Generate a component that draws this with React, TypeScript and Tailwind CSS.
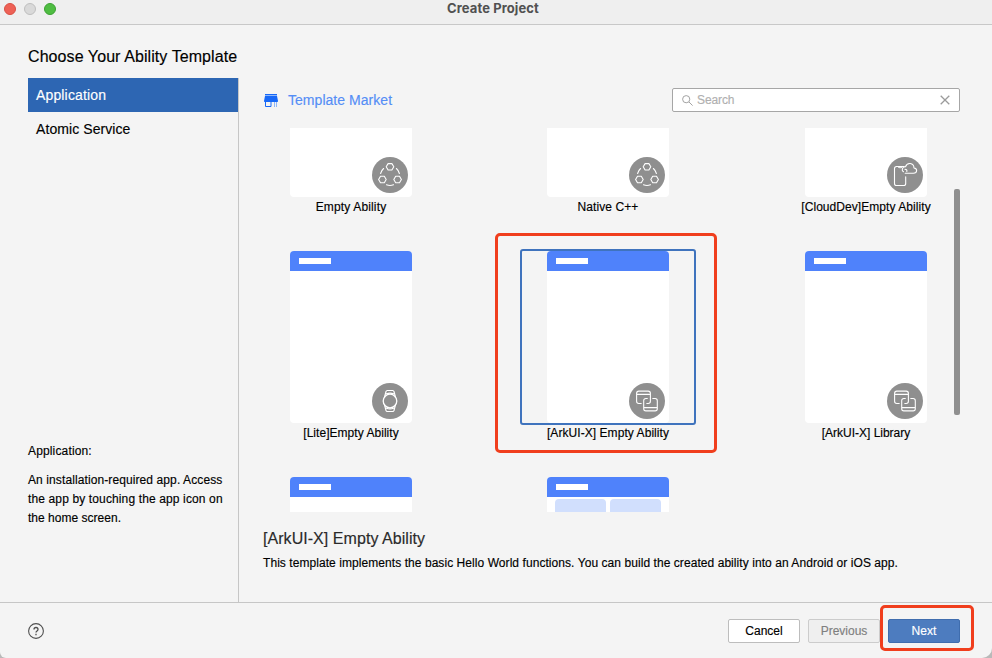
import React from "react";

type Badge = "nodes" | "cloud" | "watch" | "link" | "none";

interface Template {
  name: string;
  badge: Badge;
  selected?: boolean;
  tiles?: boolean;
  spacing: string;
}

const templates: Template[] = [
  { name: "Empty Ability", badge: "nodes", spacing: "tracking-[0.15px]" },
  { name: "Native C++", badge: "nodes", spacing: "tracking-[0.08px]" },
  { name: "[CloudDev]Empty Ability", badge: "cloud", spacing: "tracking-[0.06px]" },
  { name: "[Lite]Empty Ability", badge: "watch", spacing: "tracking-[0.04px]" },
  { name: "[ArkUI-X] Empty Ability", badge: "link", selected: true, spacing: "tracking-[0.06px]" },
  { name: "[ArkUI-X] Library", badge: "link", spacing: "tracking-[-0.01px]" },
  { name: "", badge: "none", spacing: "" },
  { name: "", badge: "none", tiles: true, spacing: "" },
];

function BadgeIcon({ kind }: { kind: Badge }) {
  return (
    <svg width="36" height="36" viewBox="0 0 36 36" fill="none" stroke="white" strokeWidth="1.1" strokeLinecap="round" strokeLinejoin="round">
      <circle cx="18" cy="18" r="18" fill="#8f8f8f" stroke="none" />
      {kind === "nodes" && (
        <>
          <path d="M16.1 6.6h3.8l1.9 3.2-1.9 3.2h-3.8l-1.9-3.2zM8.5 19.3h3.8l1.9 3.2-1.9 3.2H8.5l-1.9-3.2zM23.7 19.3h3.8l1.9 3.2-1.9 3.2h-3.8l-1.9-3.2z" />
          <path d="M8.6 16.5c.6-2 1.6-3.8 3-5M27.4 16.5c-.6-2-1.6-3.8-3-5M14.5 27.8c2.2.8 4.8.8 7 0" />
        </>
      )}
      {kind === "cloud" && (
        <>
          <path d="M17.2 9.5H9.6c-1.4 0-2.1.8-2.1 2.1v14.8c0 1.4.8 2.1 2.1 2.1h7c1.4 0 2.1-.8 2.1-2.1v-6.6M11.5 9.8c.2.8.6 1 1.6 1s1.4-.2 1.6-1" />
          <path d="M18.2 16.3h8.2c4.2 0 4.2-4.9.6-5.3-.2-5.4-6.9-6-8.5-1.2-3.9-.3-3.9 4.2-2 5M18 12.2c1.6 0 2.2 1 1.8 2.3" />
        </>
      )}
      {kind === "watch" && (
        <>
          <circle cx="18" cy="18" r="6.8" strokeWidth="1.3" />
          <path strokeWidth="1.2" d="M12.6 14l1.3-5.2c.3-.9.7-1.3 1.5-1.3h5.2c.8 0 1.2.4 1.5 1.3l1.3 5.2M12.6 22l1.3 5.2c.3.9.7 1.3 1.5 1.3h5.2c.8 0 1.2-.4 1.5-1.3l1.3-5.2M14.5 10.8c2-.7 5-.7 7 0M14.5 25.2c2 .7 5 .7 7 0" />
        </>
      )}
      {kind === "link" && (
        <>
          <path d="M12.2 20.5H9.8c-1.4 0-2.2-.8-2.2-2.2v-8c0-1.4.8-2.2 2.2-2.2h9.4c1.4 0 2.2.8 2.2 2.2v8c0 1.4-.8 2.2-2.2 2.2h-1.4M7.8 11.4h13.4" />
          <path d="M18.3 15.5h-1.4c-1.4 0-2.2.8-2.2 2.2v8c0 1.4.8 2.2 2.2 2.2h9.2c1.4 0 2.2-.8 2.2-2.2v-8c0-1.4-.8-2.2-2.2-2.2h-2.3M14.9 24.6h13.2" />
        </>
      )}
    </svg>
  );
}

function TemplateCard({ item }: { item: Template }) {
  return (
    <div className="flex h-[226px] w-[176px] flex-col items-center">
      <div className={`flex h-[176px] w-[176px] shrink-0 justify-center rounded-[3px] border-2 ${item.selected ? "border-[#3f73bd]" : "border-transparent"}`}>
        <div className="relative h-[172px] w-[122px] overflow-hidden rounded-[4px] bg-white">
          <div className="flex h-5 items-center bg-[#4f82fb] pl-[9px]">
            <div className="h-[6px] w-8 bg-white" />
          </div>
          {item.tiles && (
            <div className="flex gap-1 px-2 pt-[2px]">
              <div className="h-16 flex-1 rounded-[4px] bg-[#d1dffd]" />
              <div className="h-16 flex-1 rounded-[4px] bg-[#d1dffd]" />
            </div>
          )}
          {item.badge !== "none" && (
            <div className="absolute right-[4px] bottom-[4px]">
              <BadgeIcon kind={item.badge} />
            </div>
          )}
        </div>
      </div>
      <div className={`h-4 text-[12px] leading-4 whitespace-nowrap text-black ${item.spacing}`}>{item.name}</div>
    </div>
  );
}

export default function App() {
  return (
    <div className="h-[658px] w-[992px] overflow-hidden bg-[#b9b9b9] font-['Liberation_Sans',Arial,sans-serif] text-black [-webkit-text-stroke:0.15px]">
      <div className="relative flex h-full flex-col overflow-hidden rounded-br-[10px] rounded-bl-[6px] bg-[#f4f4f4]">
        <header className="grid h-[25px] shrink-0 grid-cols-3 border-b border-[#c8c8c8] bg-[#efefef]">
          <div className="flex gap-2 pt-[3px] pl-1">
            <span className="size-3 rounded-full border border-[#d94f43] bg-[#ee6156]" />
            <span className="size-3 rounded-full border border-[#bfbfbf] bg-[#d9d9d9]" />
            <span className="size-3 rounded-full border border-[#3ba132] bg-[#4fbd42]" />
          </div>
          <h1 className="pr-[6px] text-center font-[Inter] text-[13px] leading-4 font-bold tracking-[0.1px] text-[#515151] [-webkit-text-stroke:0]">Create Project</h1>
        </header>

        <div className="flex min-h-0 flex-1">
          <aside className="flex w-[239px] shrink-0 flex-col pl-7">
            <h2 className="mt-[21px] h-8 text-[16px] leading-[22px] whitespace-nowrap tracking-[0.08px]">Choose Your Ability Template</h2>
            <div className="flex flex-1 flex-col border-r border-[#c6c6c6]">
              <div className="h-[34px] bg-[#2d66b3] pl-2 text-[14px] leading-[34px] tracking-[0.15px] text-white">Application</div>
              <div className="h-[34px] pl-2 text-[14px] leading-[34px] tracking-[0.08px]">Atomic Service</div>
              <div className="mt-[296px] text-[12px] leading-[19px] tracking-[0.15px]">Application:</div>
              <div className="mt-[10px] text-[12px] leading-[19px] whitespace-nowrap tracking-[0.1px]">
                An installation-required app. Access
                <br />
                <span className="tracking-[0.13px]">the app by touching the app icon on</span>
                <br />
                <span className="tracking-[0.02px]">the home screen.</span>
              </div>
            </div>
          </aside>

          <main className="flex min-w-0 flex-1 flex-col pl-6">
            <div className="mt-[63px] mr-8 flex h-6 items-center justify-between">
              <div className="flex items-center">
                <svg width="16" height="16" viewBox="0 0 16 16" className="mt-[2px] mr-[9px]">
                  <path fill="#1768f7" d="M2 1h12v1H2zM2 3h12l1 5c0 .6-.4 1-1 1H2c-.6 0-1-.4-1-1z" />
                  <path fill="#8db6fb" d="M2 2h12v1H2z" />
                  <path fill="none" stroke="#1768f7" d="M2.5 8.5v5h5.5v-5" />
                  <path fill="none" stroke="#8db6fb" d="M11.5 9v5M13.5 9v5" />
                </svg>
                <span className="text-[14px] leading-6 tracking-[0.04px] text-[#548ef6]">Template Market</span>
              </div>
              <div className="flex h-6 w-72 items-center rounded-[2px] border border-[#a6a6a6] bg-white pr-[9px] pl-[9px]">
                <svg width="11" height="11" viewBox="0 0 11 11" fill="none" stroke="#a2a2a2">
                  <circle cx="4.2" cy="4.2" r="3.6" />
                  <path d="M7 7l3.6 3.6" />
                </svg>
                <span className="ml-1 flex-1 text-[12px] leading-[22px] tracking-[-0.1px] text-[#b0b0b0]">Search</span>
                <svg width="10" height="10" viewBox="0 0 10 10" stroke="#9b9b9b" strokeWidth="1.3">
                  <path d="M.7.7l8.6 8.6M9.3.7L.7 9.3" />
                </svg>
              </div>
            </div>

            <div className="mt-4 flex h-[384px] w-[697px] shrink-0 overflow-hidden">
              <div className="mt-[-105px] grid w-[691px] shrink-0 grid-cols-[257px_258px_176px] content-start justify-items-start">
                {templates.map((item, index) => (
                  <TemplateCard key={index} item={item} />
                ))}
              </div>
              <div className="mt-[61px] h-[226px] w-[6px] rounded-[2px] bg-[#8f8f8f]" />
            </div>

            <h3 className="mt-4 text-[16px] leading-[22px] tracking-[0.05px] text-[#2a2a2a]">[ArkUI-X] Empty Ability</h3>
            <p className="mt-[5px] text-[12px] leading-4 tracking-[0.063px]">
              This template implements the basic Hello World functions. You can build the created ability into an Android or iOS app.
            </p>
          </main>
        </div>

        <footer className="flex h-14 shrink-0 items-center justify-between border-t border-[#c6c6c6] pr-8 pl-7">
          <svg width="16" height="16" viewBox="0 0 16 16" fill="none" stroke="#4f4f4f">
            <circle cx="8" cy="8" r="7.4" strokeWidth="1.1" />
            <path strokeWidth="1.3" d="M6 6.5c0-2.7 4-2.7 4 0 0 1.5-2 1.5-2 3M8 10.8v1.4" />
          </svg>
          <div className="flex gap-2 text-[12px]">
            <button className="h-6 w-[72px] rounded-[2px] border border-[#bdbdbd] bg-white leading-[22px]">Cancel</button>
            <button className="h-6 w-[72px] rounded-[2px] border border-[#cccccc] bg-[#efefef] leading-[22px] text-[#7f7f7f]">Previous</button>
            <button className="h-6 w-[72px] rounded-[2px] border border-[#3f6dae] bg-[#4d7cbf] leading-[22px] tracking-[0.1px] text-white">Next</button>
          </div>
        </footer>

        <div className="absolute top-[233px] left-[495px] h-[220px] w-[222px] rounded-[5px] border-3 border-[#f03e1d]" />
        <div className="absolute top-[605px] left-[880px] h-[46px] w-[94px] rounded-[5px] border-3 border-[#f03e1d]" />
      </div>
    </div>
  );
}
